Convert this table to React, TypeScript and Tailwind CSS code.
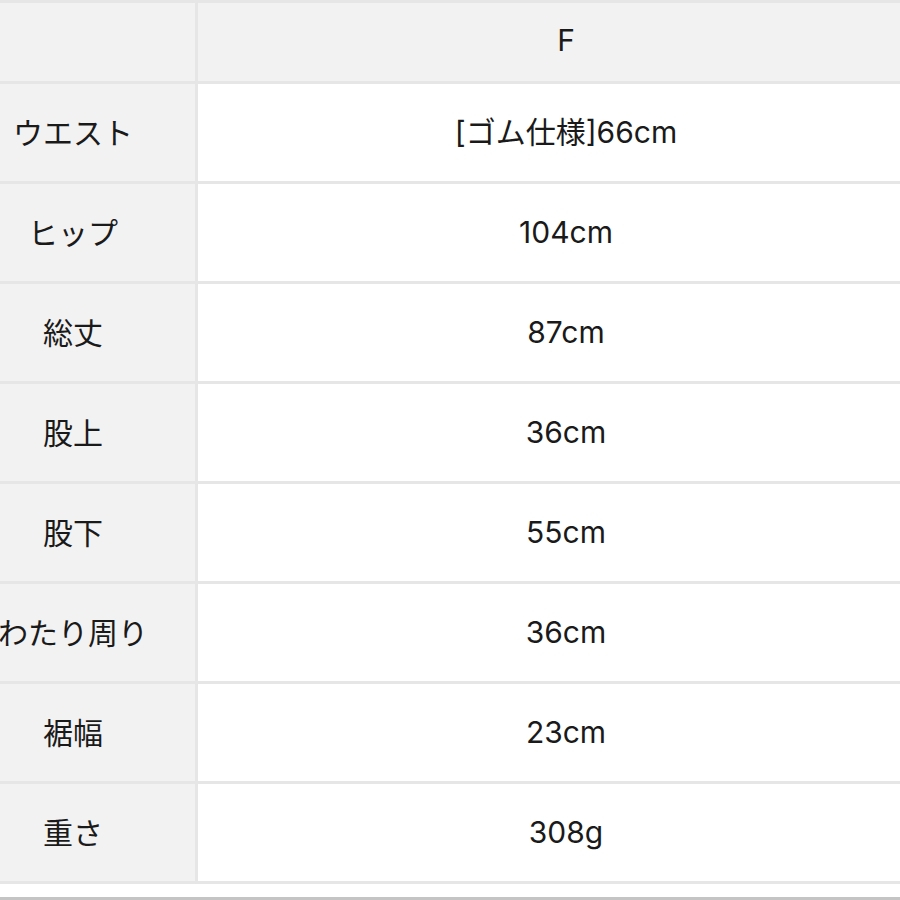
const rows: [string, string][] = [
  ["ウエスト", "[ゴム仕様]66cm"],
  ["ヒップ", "104cm"],
  ["総丈", "87cm"],
  ["股上", "36cm"],
  ["股下", "55cm"],
  ["わたり周り", "36cm"],
  ["裾幅", "23cm"],
  ["重さ", "308g"],
];

export default function App() {
  return (
    <div
      className="w-[900px] h-[900px] overflow-hidden bg-white text-[30px] leading-none text-[#1a1a1a]"
      style={{ fontFamily: 'Inter, "Noto Sans CJK JP", sans-serif' }}
    >
      <div className="ml-[-49px] w-[983px] grid grid-cols-[244px_736px] gap-[3px] bg-[#e6e6e6] py-[3px]">
        <div className="h-[78px] bg-[#f2f2f2]" />
        <div className="h-[78px] bg-[#f2f2f2] flex items-center justify-center pb-[4px]">F</div>
        {rows.map(([label, value]) => (
          <div key={label} className="contents">
            <div className="h-[97px] bg-[#f2f2f2] flex items-center justify-center whitespace-nowrap">
              {label}
            </div>
            <div className="h-[97px] bg-white flex items-center justify-center pb-[2px]">{value}</div>
          </div>
        ))}
      </div>
      <div className="h-[13px]" />
      <div className="h-[3px] bg-[#c4c4c4]" />
    </div>
  );
}
